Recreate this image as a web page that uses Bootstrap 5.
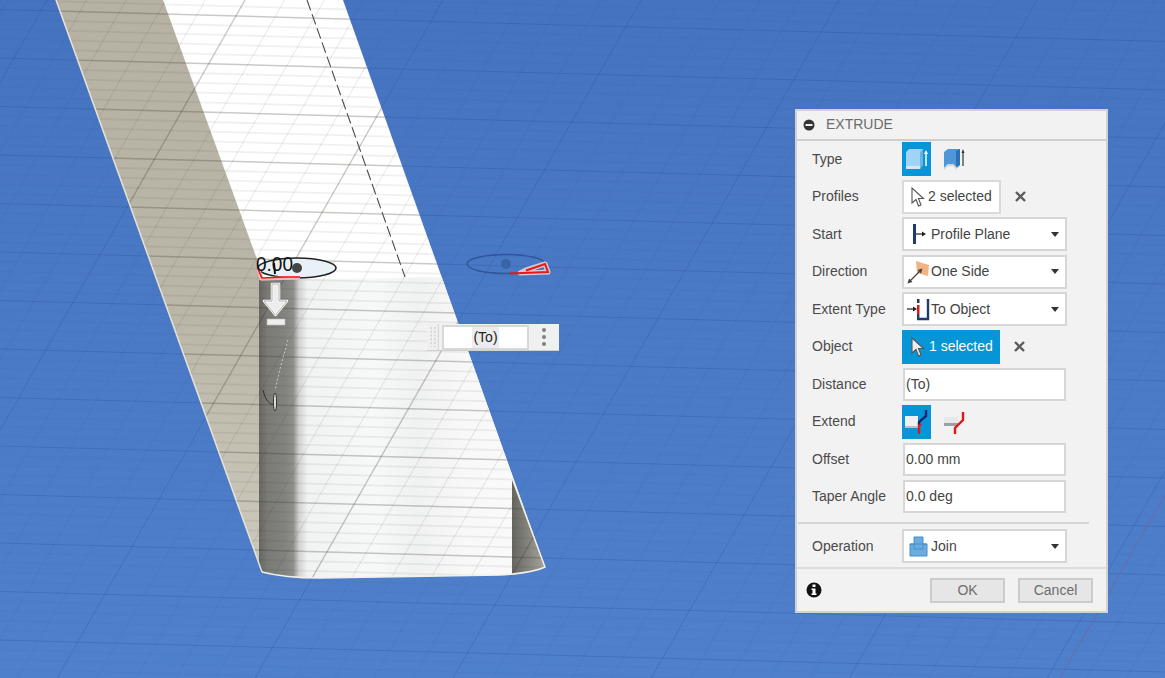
<!DOCTYPE html>
<html lang="en">
<head>
  <meta charset="UTF-8">
  <meta name="viewport" content="width=device-width, initial-scale=1">
  <title>Extrude</title>
  <link href="https://cdn.jsdelivr.net/npm/bootstrap@5.3.0/dist/css/bootstrap.min.css" rel="stylesheet">
  <style>
    html, body { margin: 0; height: 100%; overflow: hidden; }
    body { font-family: "Liberation Sans", Arial, sans-serif; font-size: 14px; color: #444; background: #4878c4; }
    .viewport { position: relative; width: 1165px; height: 678px; overflow: hidden; }
    .scene { position: absolute; left: 0; top: 0; }
    .scene-num { font-family: "Liberation Sans", Arial, sans-serif; font-size: 20px; fill: #111; }

    .extrude-panel { position: absolute; left: 795px; top: 109px; width: 313px; height: 504px; background: #f2f2f2; border: 2px solid #d2d2d2; border-radius: 0; }
    .extrude-panel .card-header { height: 29.5px; padding: 0 0 0 6px; background: #f2f2f2; border-bottom: 2px solid #cfcfcf; border-radius: 0; color: #6b6b6b; gap: 11px; }
    .extrude-panel .card-body { padding: 0; }
    .extrude-panel .card-footer { height: 44px; padding: 0 13px 0 9px; background: #f2f2f2; border-top: 2px solid #dcdcdc; border-radius: 0; }
    .prop-row { height: 37.5px; }
    .prop-label { width: 105px; padding-left: 15px; flex: none; color: #4a4a4a; }
    .tool-btn { width: 29px; height: 34px; flex: none; }
    .tool-btn.on { background: #0696d7; }
    .tool-gap { margin-left: 9px; }
    .pick-box { height: 34px; background: #fff; border: 2px solid #dadada; padding-left: 6px; gap: 3px; color: #444; white-space: nowrap; }
    .pick-box.on { background: #0696d7; border-color: #0696d7; color: #fff; gap: 4px; }
    .pick-profiles { width: 99px; }
    .pick-object { width: 98px; }
    .clear-x { margin-left: 13px; }
    .drop-box { width: 165px; height: 34px; background: #fff; border: 2px solid #d6d6d6; padding-left: 2px; color: #444; }
    .drop-icon { width: 24px; height: 24px; flex: none; margin-right: 1px; }
    .drop-caret { margin-left: auto; margin-right: 6px; width: 0; height: 0; border-left: 4px solid transparent; border-right: 4px solid transparent; border-top: 5px solid #333; }
    .form-control.text-box { width: 163px; height: 33px; margin-left: 1px; padding: 0 0 0 1px; line-height: 29px; background: #fff; border: 2px solid #d6d6d6; border-radius: 0; font-size: 14px; color: #444; }
    .panel-rule { height: 2px; margin: 6px 17px 4px 1px; background: #d4d4d4; }
    .foot-btn { width: 75px; height: 25px; padding: 0; background: #e6e6e6; border: 2px solid #cbcbcb; border-radius: 0; font-size: 14px; line-height: 20px; color: #6e6e6e; }
    .foot-btn + .foot-btn { margin-left: 13px; }

    .float-input { position: absolute; left: 427px; top: 324px; width: 132px; height: 27px; background: #f0f0f0; border-bottom: 1px solid #cfcfcf; }
    .float-grip { width: 15px; flex: none; height: 100%; }
    .float-value { width: 87px; height: 25px; background: #fff; border: 2px solid #d8d8d8; color: #222; }
    .float-value span { background: #ececec; padding: 0 1px; }
    .float-dots { width: 30px; flex: none; gap: 3px; }
    .float-dots i { display: block; width: 4px; height: 4px; border-radius: 50%; background: #808080; }
  </style>
</head>
<body>

<div class="viewport">
  <svg class="scene" id="scene" width="1165" height="678" viewBox="0 0 1165 678" xmlns="http://www.w3.org/2000/svg">
    <defs>
      <linearGradient id="skyGrad" x1="0" y1="0" x2="0" y2="1">
        <stop offset="0" stop-color="#4573bf"/>
        <stop offset="1" stop-color="#4f80cc"/>
      </linearGradient>
      <linearGradient id="brownGrad" x1="0" y1="0" x2="0" y2="1">
        <stop offset="0" stop-color="#b6b1a3"/>
        <stop offset="0.55" stop-color="#bab6a8"/>
        <stop offset="1" stop-color="#cdcabd"/>
      </linearGradient>
      <linearGradient id="frontGrad" gradientUnits="userSpaceOnUse" x1="259" y1="0" x2="545" y2="0">
        <stop offset="0" stop-color="#666662"/>
        <stop offset="0.03" stop-color="#7a7a76"/>
        <stop offset="0.09" stop-color="#82827e"/>
        <stop offset="0.12" stop-color="#8e8e8a"/>
        <stop offset="0.14" stop-color="#d2d2d2"/>
        <stop offset="0.17" stop-color="#f1f2f2"/>
        <stop offset="0.4" stop-color="#f7f8f8"/>
        <stop offset="0.55" stop-color="#f0f1f1"/>
        <stop offset="0.72" stop-color="#f8f8f8"/>
        <stop offset="1" stop-color="#fbfbfb"/>
      </linearGradient>
      <linearGradient id="backGrad" gradientUnits="userSpaceOnUse" x1="512" y1="0" x2="545" y2="0">
        <stop offset="0" stop-color="#66665f"/>
        <stop offset="0.5" stop-color="#85857f"/>
        <stop offset="1" stop-color="#a5a59c"/>
      </linearGradient>
      <clipPath id="bodyClip">
        <path d="M56 0 L262 572 Q285 578 320 578 L500 575 Q532 573 545 567 L343 0 Z"/>
      </clipPath>
    </defs>

    <rect width="1165" height="678" fill="url(#skyGrad)"/>
    <g id="skyGrid"></g>
    <path d="M1165 495 L1060 678" stroke="#7a5f9f" stroke-width="1" fill="none" opacity="0.7"/>

    <g clip-path="url(#bodyClip)">
      <rect width="1165" height="678" fill="#fff"/>
      <path d="M56 0 L163 0 L258 262 L260 280 L260 580 L240 580 Z" fill="url(#brownGrad)"/>
      <path d="M259 280 L442 277 L560 277 L560 580 L259 580 Z" fill="url(#frontGrad)"/>
      <path d="M512 478 L560 600 L512 600 Z" fill="url(#backGrad)"/>
      <g id="bodyGrid"></g>
    </g>
    <path d="M56 0 L262 572" fill="none" stroke="#e6e2d6" stroke-width="1.500"/>
    <path d="M262 572 Q285 578 320 578 L500 575 Q532 573 545 567 L512 478" fill="none" stroke="#f2f0e8" stroke-width="1.500"/>

    <path d="M307 0 L405 277" stroke="#4a4a4a" stroke-width="1.100" stroke-dasharray="11 4" fill="none"/>

    <!-- profile on the near side -->
    <ellipse cx="297" cy="268" rx="39" ry="10" fill="#e8f1f6" stroke="#222" stroke-width="1.600"/>
    <circle cx="297" cy="268" r="5" fill="#454545"/>
    <path d="M258 269 L262 279 L285 278 L300 278" fill="none" stroke="#f2b8b8" stroke-width="3.500"/>
    <path d="M258 269 L262 278 L285 277 L300 277" fill="none" stroke="#e81818" stroke-width="1.600"/>
    <text class="scene-num" x="256" y="271" textLength="37" lengthAdjust="spacingAndGlyphs">0.00</text>
    <path d="M274 263 L275 274" stroke="#111" stroke-width="2"/>

    <!-- move arrow -->
    <path d="M272 284 H279 V301 H287 L275.500 315 L264 301 H272 Z" fill="#ececec" stroke="#fff" stroke-width="2.500" stroke-linejoin="round"/>
    <path d="M272 284 H279 V301 H287 L275.500 315 L264 301 H272 Z" fill="none" stroke="#9a9a9a" stroke-width="0.800" stroke-linejoin="round"/>
    <rect x="267" y="319" width="18" height="6" fill="#eee" stroke="#bbb" stroke-width="0.600"/>

    <!-- far profile -->
    <ellipse cx="506" cy="264" rx="39" ry="9.500" fill="none" stroke="#2d5797" stroke-width="1.400"/>
    <circle cx="506" cy="264" r="5" fill="#3a64a6"/>
    <path d="M520 273 L548 272 L545 264 L526 270 Z" fill="none" stroke="#d6c6d2" stroke-width="5" stroke-linejoin="round"/>
    <path d="M510 273.500 L548 272 L545 264 L526 270.500" fill="none" stroke="#e81818" stroke-width="2"/>

    <!-- little seam on the dark strip -->
    <path d="M288 340 L281 365 L275 390" stroke="#c8c8c8" stroke-width="1" stroke-dasharray="2 2" fill="none"/>
    <path d="M263 390 Q266 404 274 405" stroke="#333" stroke-width="1" fill="none"/>
    <ellipse cx="275" cy="402" rx="1.600" ry="9" fill="#ddd" stroke="#333" stroke-width="1"/>
  </svg>

  <!-- in-canvas value box -->
  <div class="float-input d-flex align-items-center">
    <svg class="float-grip" viewBox="0 0 15 27" xmlns="http://www.w3.org/2000/svg">
      <path d="M4 3 V24 M8 3 V24" stroke="#bdbdbd" stroke-width="1" stroke-dasharray="2 2"/>
      <path d="M11.500 0 V27" stroke="#d2d2d2" stroke-width="1"/>
    </svg>
    <div class="float-value d-flex align-items-center justify-content-center"><span>(To)</span></div>
    <div class="float-dots d-flex flex-column align-items-center"><i></i><i></i><i></i></div>
  </div>

  <!-- dialog -->
  <div class="card extrude-panel">
    <div class="card-header d-flex align-items-center">
      <svg width="12" height="12" viewBox="0 0 12 12" xmlns="http://www.w3.org/2000/svg"><circle cx="6" cy="6" r="5.500" fill="#333"/><rect x="2.500" y="5" width="7" height="2" fill="#eee"/></svg>
      <span>EXTRUDE</span>
    </div>
    <div class="card-body">
      <div class="prop-row d-flex align-items-center">
        <div class="prop-label">Type</div>
        <div class="tool-btn on d-flex align-items-center justify-content-center">
          <svg width="25" height="26" viewBox="0 0 25 26" xmlns="http://www.w3.org/2000/svg">
            <path d="M2 6 L5 3 H19 V19 L16 23 H2 Z" fill="#9fd4f7"/>
            <path d="M16 6 L19 3 V19 L16 23 Z" fill="#6db2e3"/>
            <path d="M2 20 H16 V23 H2 Z" fill="#d8e6ee"/>
            <path d="M22 6 V20" stroke="#fff" stroke-width="1.500"/><path d="M20 8 L22 4 L24 8 Z" fill="#fff"/>
          </svg>
        </div>
        <div class="tool-btn tool-gap d-flex align-items-center justify-content-center">
          <svg width="25" height="26" viewBox="0 0 25 26" xmlns="http://www.w3.org/2000/svg">
            <path d="M2 6 L6 3 H18 V19 L15 22 L11 18 H6 L2 22 Z" fill="#4f97d8"/>
            <path d="M14 5 L18 3 V19 L14 21 Z" fill="#2f70b2"/>
            <path d="M2 22 L6 18 H11 L15 22 V24 L11 20 H6 L2 24 Z" fill="#cfd6da"/>
            <path d="M21 6 V20" stroke="#333" stroke-width="1.200"/><path d="M19.500 7 L21 3 L22.500 7 Z" fill="#333"/>
          </svg>
        </div>
      </div>

      <div class="prop-row d-flex align-items-center">
        <div class="prop-label">Profiles</div>
        <div class="pick-box pick-profiles d-flex align-items-center">
          <svg width="15" height="22" viewBox="0 0 15 22" xmlns="http://www.w3.org/2000/svg"><path d="M2 2 V17 L6 13.500 L8.500 20 L11 19 L8.500 12.500 L13.500 12.500 Z" fill="#fff" stroke="#555" stroke-width="1.100"/></svg>
          <span>2 selected</span>
        </div>
        <svg class="clear-x" width="13" height="13" viewBox="0 0 13 13" xmlns="http://www.w3.org/2000/svg"><path d="M2 2 L11 11 M11 2 L2 11" stroke="#5c5c5c" stroke-width="2.400"/></svg>
      </div>

      <div class="prop-row d-flex align-items-center">
        <div class="prop-label">Start</div>
        <div class="drop-box d-flex align-items-center">
          <svg class="drop-icon" viewBox="0 0 24 24" xmlns="http://www.w3.org/2000/svg"><rect x="7" y="2" width="3" height="20" fill="#1e3a6e"/><path d="M10 12 H17" stroke="#222" stroke-width="1.200"/><path d="M16 9.500 L20 12 L16 14.500 Z" fill="#222"/></svg>
          <span>Profile Plane</span><i class="drop-caret"></i>
        </div>
      </div>

      <div class="prop-row d-flex align-items-center">
        <div class="prop-label">Direction</div>
        <div class="drop-box d-flex align-items-center">
          <svg class="drop-icon" viewBox="0 0 24 24" xmlns="http://www.w3.org/2000/svg"><path d="M10 1 L23 5 L22 16 L11 13 Z" fill="#f0b483"/><path d="M3 22 L15 10" stroke="#444" stroke-width="1.300"/><path d="M1.500 23.500 L3 18.500 L6.500 22 Z" fill="#444"/><path d="M16.500 8.500 L11.500 10 L15 13.500 Z" fill="#444"/></svg>
          <span>One Side</span><i class="drop-caret"></i>
        </div>
      </div>

      <div class="prop-row d-flex align-items-center">
        <div class="prop-label">Extent Type</div>
        <div class="drop-box d-flex align-items-center">
          <svg class="drop-icon" viewBox="0 0 24 24" xmlns="http://www.w3.org/2000/svg"><path d="M1 12 H9" stroke="#222" stroke-width="1.200"/><path d="M7 9.500 L11 12 L7 14.500 Z" fill="#222"/><rect x="11" y="2" width="2.500" height="4" fill="#1e3a6e"/><rect x="11" y="8" width="2.500" height="9" fill="#e01818"/><path d="M12.200 17 V22 H22 V2" fill="none" stroke="#1e3a6e" stroke-width="2.400"/></svg>
          <span>To Object</span><i class="drop-caret"></i>
        </div>
      </div>

      <div class="prop-row d-flex align-items-center">
        <div class="prop-label">Object</div>
        <div class="pick-box on pick-object d-flex align-items-center">
          <svg width="15" height="22" viewBox="0 0 15 22" xmlns="http://www.w3.org/2000/svg"><path d="M2 2 V17 L6 13.500 L8.500 20 L11 19 L8.500 12.500 L13.500 12.500 Z" fill="#eee" stroke="#555" stroke-width="1.100"/></svg>
          <span>1 selected</span>
        </div>
        <svg class="clear-x" width="13" height="13" viewBox="0 0 13 13" xmlns="http://www.w3.org/2000/svg"><path d="M2 2 L11 11 M11 2 L2 11" stroke="#5c5c5c" stroke-width="2.400"/></svg>
      </div>

      <div class="prop-row d-flex align-items-center">
        <div class="prop-label">Distance</div>
        <div class="form-control text-box">(To)</div>
      </div>

      <div class="prop-row d-flex align-items-center">
        <div class="prop-label">Extend</div>
        <div class="tool-btn on d-flex align-items-center justify-content-center">
          <svg width="27" height="28" viewBox="0 0 27 28" xmlns="http://www.w3.org/2000/svg">
            <rect x="2" y="8" width="13" height="10" fill="#eef0f2"/><rect x="2" y="18" width="13" height="2" fill="#b8c0c8"/>
            <path d="M16 17 L16 14 L23 8 V2" fill="none" stroke="#12246e" stroke-width="2.400"/>
            <path d="M16 26 V18 L18 16" fill="none" stroke="#e01818" stroke-width="2.400"/>
          </svg>
        </div>
        <div class="tool-btn tool-gap d-flex align-items-center justify-content-center">
          <svg width="27" height="28" viewBox="0 0 27 28" xmlns="http://www.w3.org/2000/svg">
            <path d="M3 9 H17 V17 H3 Z" fill="#e6e8ea"/><rect x="3" y="15" width="14" height="3" fill="#9aa2a8"/>
            <path d="M14 26 V20 L22 12 V4" fill="none" stroke="#e01818" stroke-width="2.400"/>
          </svg>
        </div>
      </div>

      <div class="prop-row d-flex align-items-center">
        <div class="prop-label">Offset</div>
        <div class="form-control text-box">0.00 mm</div>
      </div>

      <div class="prop-row d-flex align-items-center">
        <div class="prop-label">Taper Angle</div>
        <div class="form-control text-box">0.0 deg</div>
      </div>

      <div class="panel-rule"></div>

      <div class="prop-row d-flex align-items-center">
        <div class="prop-label">Operation</div>
        <div class="drop-box d-flex align-items-center">
          <svg class="drop-icon" viewBox="0 0 24 24" xmlns="http://www.w3.org/2000/svg"><path d="M8 3 H17 V10 H21 V22 H4 V10 H8 Z" fill="#69ade0" stroke="#4a8cc4" stroke-width="1"/><path d="M4 10 H21 M8 10 V15 H17 V10" fill="none" stroke="#4a8cc4" stroke-width="1"/></svg>
          <span>Join</span><i class="drop-caret"></i>
        </div>
      </div>
    </div>
    <div class="card-footer d-flex align-items-center">
      <svg width="16" height="16" viewBox="0 0 16 16" xmlns="http://www.w3.org/2000/svg"><circle cx="8" cy="8" r="7.500" fill="#111"/><rect x="6.500" y="2.500" width="3" height="2.500" fill="#fff"/><path d="M5.500 6.500 H9.500 V11.500 H10.500 V13 H5.500 V11.500 H6.500 V8 H5.500 Z" fill="#fff"/></svg>
      <button type="button" class="btn foot-btn ms-auto">OK</button>
      <button type="button" class="btn foot-btn">Cancel</button>
    </div>
  </div>
</div>

<script src="https://cdn.jsdelivr.net/npm/bootstrap@5.3.0/dist/js/bootstrap.bundle.min.js"></script>
<script>
  // ground and body grid: same two line families, drawn twice with different strokes
  const NS = 'http://www.w3.org/2000/svg';

  function addLine(group, x1, y1, x2, y2, stroke, width) {
    const l = document.createElementNS(NS, 'line');
    l.setAttribute('x1', x1);
    l.setAttribute('y1', y1);
    l.setAttribute('x2', x2);
    l.setAttribute('y2', y2);
    l.setAttribute('stroke', stroke);
    l.setAttribute('stroke-width', width);
    group.appendChild(l);
  }

  function drawGrid(group, major, minorRow, minorCol, majorW, minorW) {
    const rowStep = 48.5 / 5;
    const colStep = 198 / 5;
    for (let i = -10; i < 90; i++) {
      const y = 10.5 + i * rowStep;
      const isMajor = ((i % 5) + 5) % 5 === 0;
      addLine(group, 0, y - 1, 1165, y + 31, isMajor ? major : minorRow, isMajor ? majorW : minorW);
    }
    for (let i = -20; i < 60; i++) {
      const x = 47 + i * colStep;
      const isMajor = ((i % 5) + 5) % 5 === 0;
      addLine(group, x, 0, x - 678 * 0.569, 678, isMajor ? major : minorCol, isMajor ? majorW : 1);
    }
  }

  drawGrid(document.getElementById('skyGrid'), 'rgba(40,80,150,0.28)', 'rgba(50,90,160,0.08)', 'rgba(50,90,160,0.12)', 1, 1);
  drawGrid(document.getElementById('bodyGrid'), 'rgba(60,60,50,0.28)', 'rgba(60,60,50,0.08)', 'rgba(60,60,50,0.12)', 1.4, 1.8);
</script>

</body>
</html>
